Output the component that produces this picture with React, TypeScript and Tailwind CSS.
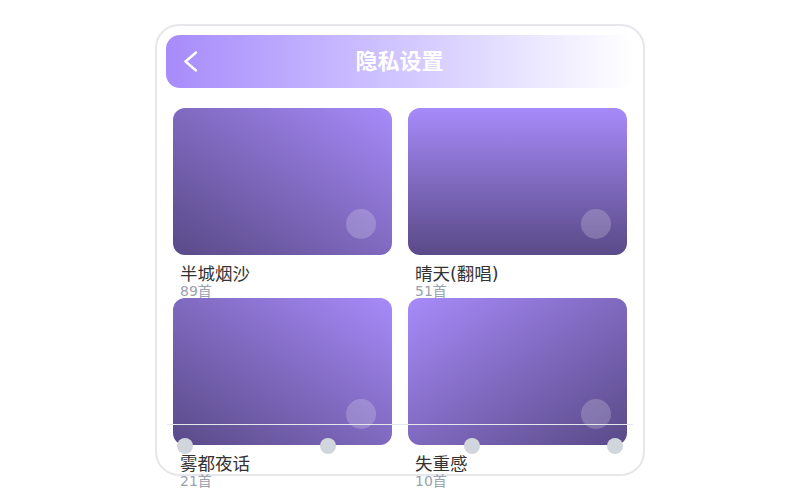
import React from "react";

// Playlist cards
const lists = [
  { name: "半城烟沙", count: 89, grad: "bg-linear-to-bl" },
  { name: "晴天(翻唱)", count: 51, grad: "bg-linear-to-b" },
  { name: "雾都夜话", count: 21, grad: "bg-linear-to-bl" },
  { name: "失重感", count: 10, grad: "bg-linear-to-br" },
];

function Card({ item }: { item: (typeof lists)[number] }) {
  return (
    <div className="flex flex-col">
      <div
        className={`relative h-[147px] rounded-[12px] ${item.grad} from-[#a78bfa] to-[#5a4a88]`}
      >
        <div className="absolute right-[16px] bottom-[16px] w-[30px] h-[30px] rounded-full bg-white/20" />
      </div>
      <p className="mt-[9px] pl-[7px] text-[17.5px] leading-[20px] text-[#333]">{item.name}</p>
      <p className="pl-[7px] text-[14px] leading-[14px] text-gray-400">{item.count}首</p>
    </div>
  );
}

export default function App() {
  return (
    <div
      className="w-[800px] h-[500px] flex items-center justify-center bg-white"
      style={{ fontFamily: '"DejaVu Sans", "Noto Sans CJK SC", sans-serif' }}
    >
      {/* Frame */}
      <div className="relative w-[490px] h-[452px] rounded-[24px] border-2 border-[#e5e7eb] pt-[9px] px-[9px]">
        {/* Header */}
        <div className="relative flex items-center justify-center h-[53px] w-[467px] rounded-[14px] bg-linear-to-r from-[#a78bfa] to-white">
          <svg
            className="absolute left-[17px] top-[16px]"
            width="15"
            height="21"
            viewBox="0 0 15 21"
            fill="none"
          >
            <polyline
              points="13,1.5 2.5,10.5 13,19.5"
              stroke="white"
              strokeWidth="2.4"
              strokeLinecap="round"
              strokeLinejoin="round"
            />
          </svg>
          <h1 className="text-[22px] font-bold text-white">隐私设置</h1>
        </div>

        {/* Grid */}
        <div className="grid grid-cols-2 gap-x-[16px] mt-[20px] pl-[7px] w-[461px]">
          {lists.map((item, key) => (
            <Card item={item} key={key} />
          ))}
        </div>

        {/* Overlay track */}
        <div className="absolute left-[10px] top-[398px] w-[466px] h-px bg-gray-200" />
        <div className="absolute left-[20px] top-[412px] w-[16px] h-[16px] rounded-full bg-gray-300" />
        <div className="absolute left-[163px] top-[412px] w-[16px] h-[16px] rounded-full bg-gray-300" />
        <div className="absolute left-[307px] top-[412px] w-[16px] h-[16px] rounded-full bg-gray-300" />
        <div className="absolute left-[450px] top-[412px] w-[16px] h-[16px] rounded-full bg-gray-300" />
      </div>
    </div>
  );
}
